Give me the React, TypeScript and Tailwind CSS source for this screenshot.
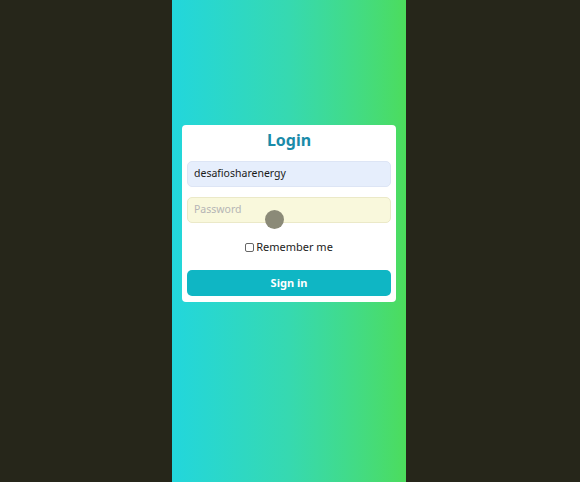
import React from "react";

export default function App() {
  return (
    <div className="relative w-[580px] h-[482px] bg-[#26261a] overflow-hidden" style={{ fontFamily: '"Noto Sans", sans-serif' }}>
      <div className="ml-[172px] w-[234px] h-[482px] bg-gradient-to-r from-[#22d6dc] via-[#36d9b0] to-[#4cdc5c] pt-[125px] flex flex-col items-center">
        <div className="w-[214px] rounded-[4px] bg-white px-[5px] pt-[3px] pb-[6px] flex flex-col">
          <h1 className="text-center text-[16px] leading-[24px] font-bold text-[#1a8ba9]">Login</h1>
          <div className="mt-[9px] h-[26px] rounded-[5px] bg-[#e6eefc] border border-[#dde5f5] flex items-center pl-[6px] text-[10.5px] text-[#1a1a1a]">
            desafiosharenergy
          </div>
          <div className="mt-[10px] h-[26px] rounded-[5px] bg-[#f9f8dc] border border-[#ebe9c8] flex items-center pl-[6px] text-[10.5px] text-[#b5b5b5]">
            Password
          </div>
          <div className="mt-[16px] h-[16px] flex items-center justify-center text-[11px] text-[#222]">
            <span className="w-[9px] h-[9px] border border-[#666] rounded-[2px] bg-white mr-[2px]" />
            <span>Remember me</span>
          </div>
          <button className="mt-[15px] h-[26px] rounded-[5px] bg-[#0fb6c4] text-white text-[11px] font-bold flex items-center justify-center">
            Sign in
          </button>
        </div>
      </div>
      <div className="absolute left-[265px] top-[210px] w-[19px] h-[19px] rounded-full bg-[#8b8a78]" />
    </div>
  );
}
